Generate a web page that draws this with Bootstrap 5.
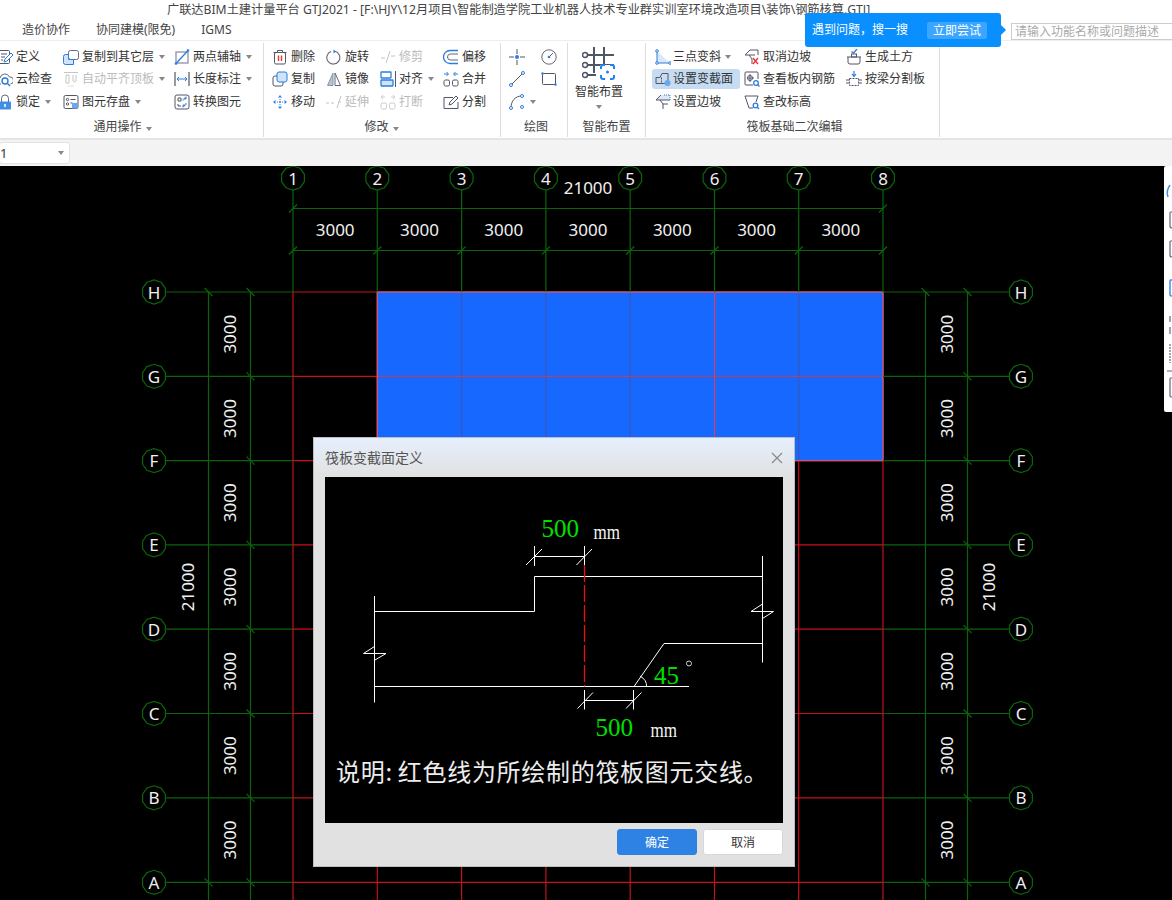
<!DOCTYPE html>
<html lang="zh-CN">
<head>
    <meta charset="UTF-8">
    <meta name="viewport" content="width=device-width, initial-scale=1.0">
    <title>筏板变截面定义</title>
    <link rel="stylesheet" href="https://cdn.jsdelivr.net/npm/bootstrap@5.3.0/dist/css/bootstrap.min.css">
    <style>
        html, body { margin: 0; background: #000; overflow: hidden; }
        body { font-family: "Noto Sans", "Noto Sans CJK SC", sans-serif; font-size: 12px; color: #333; }
        .app-shell { width: 1172px; height: 900px; overflow: hidden; position: relative; }
        .title-row { height: 20px; line-height: 20px; padding-left: 167px; background: #fff; white-space: nowrap; overflow: hidden; font-size: 12.2px; color: #444; }
        .tab-row { height: 21px; background: #fff; border-bottom: 1px solid #eee; padding-left: 22px; gap: 26px; line-height: 20px; color: #444; }
        .search-box { margin-left: auto; width: 170px; flex: none; height: 17px; margin-top: 3px; margin-right: -9px; border: 1px solid #ccc; border-radius: 0; padding: 0 3px; font-size: 12px; line-height: 15px; color: #aaa; background: #fff; }
        .ribbon { height: 99px; background: #fff; border-bottom: 2px solid #e4e4e4; }
        .rib-group { height: 94px; border-right: 1px solid #ddd; margin-top: 2px; flex: none; }
        .rib-cols { height: 74px; padding-top: 2.5px; }
        .rib-label { height: 20px; line-height: 20px; text-align: center; color: #444; }
        .g-main { width: 264px; }
        .g-main .rib-label { padding-right: 18px; }
        .g-edit { width: 237px; }
        .g-edit .rib-label { padding-right: 1px; }
        .g-draw { width: 67px; }
        .g-draw .rib-label { padding-left: 4px; }
        .g-smart { width: 78px; }
        .g-raft { width: 294px; }
        .g-raft .rib-label { padding-left: 4px; }
        .c-a { width: 66px; margin-left: -3px; }
        .c-b { width: 111px; }
        .c-c { width: 89px; }
        .c-d { width: 54px; margin-left: 8px; }
        .c-e { width: 54px; }
        .c-f { width: 63px; }
        .c-g { width: 56px; }
        .c-h { width: 32px; margin-left: 8px; }
        .c-i { width: 89px; margin-left: 9px; }
        .c-i .tool { gap: 2px; }
        .c-j { width: 102px; }
        .c-k { width: 80px; }
        .tool { height: 22.5px; gap: 3px; white-space: nowrap; color: #333; }
        .tool svg { flex: none; width: 16px; height: 16px; }
        .tool-off { color: #bbb; }
        .tool-on { background: #c5dcf3; border-radius: 3px; margin-left: -3px; padding-left: 3px; width: 88px; height: 20px; margin-top: 1px; margin-bottom: 1.5px; }
        .tool-caret { display: inline-block; width: 0; height: 0; border: 3px solid transparent; border-top: 4px solid #888; border-bottom: 0; margin-left: 4px; }
        .tool .tool-caret { margin-left: 2px; }
        .big-tool { width: 48px; height: 70px; margin-left: 7px; }
        .big-tool svg { width: 34px; height: 36px; }
        .big-tool .tool-caret { margin-left: 0; margin-top: 4px; }
        .big-name { margin-top: 1px; line-height: 18px; }
        .prop-bar { height: 26px; background: #f3f3f3; padding-top: 2px; }
        .floor-pick { width: 71px; height: 22px; margin-left: -1px; background: #fff; border: 1px solid #e2e2e2; border-radius: 3px; line-height: 20px; padding-right: 5px; font-size: 13px; color: #333; }
        .cad-view { display: block; width: 1172px; height: 734px; background: #000; }
        .cad-txt { font-family: "Noto Sans", sans-serif; font-size: 17px; fill: #f0f0f0; text-anchor: middle; dominant-baseline: central; }
        .hint-pop { position: absolute; left: 805px; top: 13px; width: 196px; height: 34px; background: #0a8fff; border-radius: 3px; color: #fff; padding-left: 7px; font-size: 12px; }
        .hint-pop::after { content: ""; position: absolute; left: 196px; top: 12px; border: 5px solid transparent; border-left-color: #0a8fff; border-right: 0; }
        .hint-btn { margin-left: 19px; width: 60px; height: 17px; line-height: 17px; text-align: center; background: #3ba5ff; border-radius: 2px; }
        .side-strip { position: absolute; left: 1164px; top: 166px; width: 8px; height: 246px; background: #fff; border-radius: 2px 0 0 2px; }
        .side-strip svg { display: block; }
        .raft-dlg { position: absolute; left: 313px; top: 437px; width: 482px; height: 430px; background: #e1e1e1; border: 1px solid #bdbdbd; }
        .dlg-head { height: 39px; padding: 0 11px; background: linear-gradient(#e6effd, #e1e1e1); color: #555; font-size: 14px; }
        .dlg-shot { display: block; width: 458px; height: 346px; margin-left: 11px; background: #000; }
        .dlg-foot { padding: 6px 11px 0 0; gap: 6px; }
        .dlg-btn { width: 80px; height: 26px; padding: 2px 0 0; font-size: 12px; line-height: 22px; border-radius: 3px; }
        .dlg-ok { background: #2e82e3; border: 1px solid #2e82e3; color: #fff; }
        .dlg-no { background: #fff; border: 1px solid #d8d8d8; color: #333; }
        .shot-serif { font-family: "Liberation Serif", serif; }
        .shot-note { font-family: "Noto Sans CJK SC", sans-serif; font-size: 24px; fill: #ececec; letter-spacing: .7px; }
    </style>
</head>
<body>
<svg width="0" height="0" class="position-absolute">
    <defs>
        <symbol id="i-def" viewBox="0 0 16 16"><rect x="1.500" y="1.500" width="11" height="13" rx="1" fill="none" stroke="#556"/><path d="M4 5h6M4 8h4M4 11h2" stroke="#556"/><path d="M7 13l1-3 6-6 2 2-6 6z" fill="#fff" stroke="#2b7de0"/></symbol>
        <symbol id="i-cloud" viewBox="0 0 16 16"><path d="M4 13H3a3 3 0 0 1 0-6 5 5 0 0 1 9.500-1 3.500 3.500 0 0 1 1 7" fill="none" stroke="#667"/><circle cx="8" cy="10" r="3" fill="#fff" stroke="#2b7de0" stroke-width="1.400"/><path d="M10 12l3 3" stroke="#2b7de0" stroke-width="1.400"/></symbol>
        <symbol id="i-lock" viewBox="0 0 16 16"><path d="M4.500 8V4.500a3.500 3.500 0 0 1 7 0V8" fill="none" stroke="#667"/><rect x="2" y="7.500" width="12" height="8" rx="1" fill="#3f8fe8"/><rect x="7.200" y="10" width="1.600" height="3" fill="#fff"/></symbol>
        <symbol id="i-layer" viewBox="0 0 16 16"><rect x="5.500" y="1.500" width="10" height="9" rx="2" fill="#fff" stroke="#667"/><path d="M.5 7.500a2 2 0 0 1 2-2h3v5h5v5h-8a2 2 0 0 1-2-2z" fill="#cfe3fa" stroke="#2b7de0"/></symbol>
        <symbol id="i-auto" viewBox="0 0 16 16"><path d="M1 1.500h14M3 4h3v8H3zM10 4v6a2 2 0 0 0 3 0V4" fill="none" stroke="#c4c4c4"/><path d="M5 15h6" stroke="#ddd"/></symbol>
        <symbol id="i-save" viewBox="0 0 16 16"><rect x="1" y="1.500" width="14" height="13" rx="1.500" fill="none" stroke="#556"/><circle cx="4.500" cy="5.500" r="1.200" fill="none" stroke="#556"/><circle cx="4.500" cy="10" r="1.200" fill="none" stroke="#556"/><path d="M7.500 5.500h5M7.500 9h2" stroke="#556"/><rect x="9" y="9" width="6" height="5.500" fill="#6aa8ec"/></symbol>
        <symbol id="i-axis" viewBox="0 0 16 16"><rect x="2" y="3" width="12" height="11" fill="none" stroke="#99a" stroke-width="1.400"/><path d="M1.500 15L14.500 1" stroke="#2b7de0" stroke-width="1.300"/><circle cx="2" cy="14.500" r="1.300" fill="#2b7de0"/><circle cx="14" cy="1.500" r="1.300" fill="#2b7de0"/></symbol>
        <symbol id="i-len" viewBox="0 0 16 16"><path d="M1 1v14M15 1v14" stroke="#556" stroke-width="1.200"/><path d="M3 8h10M5 6L3 8l2 2M11 6l2 2-2 2" fill="none" stroke="#2b7de0"/></symbol>
        <symbol id="i-swap" viewBox="0 0 16 16"><rect x="1" y="1" width="14" height="14" rx="2" fill="none" stroke="#556"/><path d="M4 4h3v3H4zM4 10v2h3" fill="none" stroke="#556"/><path d="M9 6.500a2.500 2.500 0 0 1 3-2.500M12 2.500V5H10M12 9a2.500 2.500 0 0 1-3 3M9 13.500V11h2" fill="none" stroke="#2b7de0"/></symbol>
        <symbol id="i-del" viewBox="0 0 16 16"><path d="M1.500 3.500h13M5.500 3.500V1.500h5v2" fill="none" stroke="#556"/><rect x="2.500" y="3.500" width="11" height="11.500" rx="1.500" fill="none" stroke="#556"/><path d="M6.500 6.500v5.500M9.500 6.500v5.500" stroke="#e33" stroke-width="1.400"/></symbol>
        <symbol id="i-rot" viewBox="0 0 16 16"><path d="M9 2.300A6.500 6.500 0 1 1 5 2.500" fill="none" stroke="#667" stroke-width="1.100"/><path d="M7.500.5L10 2.500 7.500 4.500z" fill="#2b7de0"/></symbol>
        <symbol id="i-trim" viewBox="0 0 16 16"><path d="M1 9h4M11 7h4M6 14L10 2" fill="none" stroke="#c4c4c4"/></symbol>
        <symbol id="i-copy" viewBox="0 0 16 16"><rect x="1" y="5" width="10" height="10" rx="2" fill="#fff" stroke="#556"/><rect x="5" y="1" width="10" height="10" rx="2" fill="#cfe3fa" stroke="#2b7de0"/></symbol>
        <symbol id="i-mirror" viewBox="0 0 16 16"><path d="M7 2L1.500 14.500H7z" fill="#b6c6da" stroke="#8a96a8"/><path d="M9 2l5.500 12.500H9z" fill="#fff" stroke="#667"/></symbol>
        <symbol id="i-align" viewBox="0 0 16 16"><rect x="1" y="1" width="10" height="6" rx=".5" fill="#fff" stroke="#2b7de0" stroke-width="1.300"/><rect x="1" y="9" width="12" height="6" rx=".5" fill="#cfe3fa" stroke="#2b7de0" stroke-width="1.300"/><path d="M15.500 0v16" stroke="#556"/></symbol>
        <symbol id="i-merge" viewBox="0 0 16 16"><rect x="1" y="9" width="5.500" height="6" rx="1.500" fill="none" stroke="#556"/><rect x="9.500" y="9" width="5.500" height="6" rx="1.500" fill="none" stroke="#556"/><path d="M1 3h4M3.500 1L5.500 3 3.500 5M15 3h-4M12.500 1l-2 2 2 2" fill="none" stroke="#2b7de0"/></symbol>
        <symbol id="i-move" viewBox="0 0 16 16"><path d="M8 1L6 3.500h4zM8 15l-2-2.500h4zM1 8l2.500-2v4zM15 8l-2.500-2v4z" fill="#2b7de0"/><path d="M8 5v1M8 10v1M5 8h1M10 8h1" stroke="#2b7de0"/><circle cx="8" cy="8" r="1" fill="#2b7de0"/></symbol>
        <symbol id="i-ext" viewBox="0 0 16 16"><path d="M0 9h3M5 9h3M11 14l4-12M12 8h3" fill="none" stroke="#c4c4c4"/></symbol>
        <symbol id="i-break" viewBox="0 0 16 16"><rect x="1" y="9" width="5.500" height="6" rx="1.500" fill="none" stroke="#ccc"/><rect x="9.500" y="9" width="5.500" height="6" rx="1.500" fill="none" stroke="#ccc"/><path d="M1 3h4M3 1L1 3l2 2M15 3h-4M13 1l2 2-2 2" fill="none" stroke="#ccc"/></symbol>
        <symbol id="i-offset" viewBox="0 0 16 16"><path d="M15 1.500H7a6.500 6.500 0 0 0 0 13h8" fill="none" stroke="#2b7de0" stroke-width="1.300"/><path d="M15 5H7.500a3 3 0 0 0 0 6H15" fill="none" stroke="#667"/></symbol>
        <symbol id="i-split" viewBox="0 0 16 16"><path d="M15 8v6.500H1v-11h9" fill="none" stroke="#556"/><path d="M6 11l1-3 6-6 2 2-6 6z" fill="#fff" stroke="#556"/></symbol>
        <symbol id="i-pt" viewBox="0 0 16 16"><path d="M0 8h5M11 8h5M8 0v5M8 11v5" stroke="#556"/><circle cx="8" cy="8" r="2" fill="#2b7de0"/></symbol>
        <symbol id="i-circ" viewBox="0 0 16 16"><circle cx="8" cy="8" r="7.200" fill="none" stroke="#667"/><path d="M8 8l4-4" stroke="#667"/><circle cx="8" cy="8" r="1.300" fill="#2b7de0"/></symbol>
        <symbol id="i-line" viewBox="0 0 16 16"><path d="M2 14L14 2" stroke="#556"/><circle cx="2" cy="14" r="1.500" fill="#fff" stroke="#2b7de0"/><circle cx="14" cy="2" r="1.500" fill="#fff" stroke="#2b7de0"/></symbol>
        <symbol id="i-rect" viewBox="0 0 16 16"><rect x="1.500" y="2.500" width="13" height="11" rx="1" fill="none" stroke="#556"/><circle cx="1.500" cy="2.500" r="1.200" fill="#2b7de0"/><circle cx="14.500" cy="13.500" r="1.200" fill="#2b7de0"/></symbol>
        <symbol id="i-arc" viewBox="0 0 16 16"><path d="M2 14C2 7 6 2 13 2" fill="none" stroke="#556"/><circle cx="2" cy="14" r="1.500" fill="#fff" stroke="#2b7de0"/><circle cx="13" cy="2" r="1.500" fill="#fff" stroke="#2b7de0"/><circle cx="13" cy="13" r="1.500" fill="#fff" stroke="#2b7de0"/></symbol>
        <symbol id="i-grid" viewBox="0 0 34 36"><path d="M12 1v26M22 1v20M0 9h32M0 19h32M0 29h14" stroke="#4d5665" stroke-width="2"/><circle cx="3" cy="9" r="2.500" fill="#fff" stroke="#4d5665" stroke-width="1.500"/><circle cx="3" cy="19" r="2.500" fill="#fff" stroke="#4d5665" stroke-width="1.500"/><circle cx="3" cy="29" r="2.500" fill="#fff" stroke="#4d5665" stroke-width="1.500"/><rect x="18" y="19" width="15" height="15" fill="#fff"/><path d="M19 23v-2a2 2 0 0 1 2-2h2M28 19h2a2 2 0 0 1 2 2v2M32 29v2a2 2 0 0 1-2 2h-2M23 33h-2a2 2 0 0 1-2-2v-2" fill="none" stroke="#1f82ee" stroke-width="2"/><circle cx="25.500" cy="26" r="1.500" fill="#1f82ee"/></symbol>
        <symbol id="i-tri" viewBox="0 0 16 16"><path d="M2 2v12h13z" fill="#dbe8f8"/><path d="M2 2v12h13" fill="none" stroke="#2b7de0"/><circle cx="2" cy="2" r="1.300" fill="#fff" stroke="#2b7de0"/><circle cx="2" cy="14" r="1.300" fill="#fff" stroke="#2b7de0"/><circle cx="15" cy="14" r="1.300" fill="#fff" stroke="#2b7de0"/></symbol>
        <symbol id="i-var" viewBox="0 0 16 16"><path d="M1 6.500h4l2-4h6v10H1z" fill="none" stroke="#556"/><path d="M6.500 6.500v6" stroke="#556" stroke-dasharray="2 1"/><circle cx="12.500" cy="12" r="3" fill="#6aa8ec"/></symbol>
        <symbol id="i-slope" viewBox="0 0 16 16"><path d="M1 6L7 1h8v5z" fill="#dbe8f8"/><path d="M1 6L6 1" stroke="#556"/><path d="M1 6h14M5 6l3 4h5" fill="none" stroke="#556"/><path d="M8 10v5" stroke="#556"/><path d="M9 1h6v5" fill="none" stroke="#2b7de0" stroke-dasharray="1 1"/></symbol>
        <symbol id="i-unslope" viewBox="0 0 16 16"><path d="M1 6L6 1h8v5" fill="none" stroke="#556"/><path d="M1 6h10M5 6l3 4M8 10v5" fill="none" stroke="#556"/><path d="M9 9l5 6M14 9l-5 6" stroke="#e33" stroke-width="1.400"/></symbol>
        <symbol id="i-rebar" viewBox="0 0 16 16"><path d="M9 14H2a1 1 0 0 1-1-1V2a1 1 0 0 1 1-1h11a1 1 0 0 1 1 1v6" fill="none" stroke="#556"/><circle cx="6" cy="7" r="2.500" fill="none" stroke="#556"/><path d="M6 3v8M3 7h7" stroke="#556"/><circle cx="12" cy="12" r="2.300" fill="#fff" stroke="#2b7de0" stroke-width="1.300"/><path d="M13.500 13.500L15.500 15.500" stroke="#2b7de0" stroke-width="1.300"/></symbol>
        <symbol id="i-elev" viewBox="0 0 16 16"><path d="M9 14H5L1 2h13l-2 6" fill="none" stroke="#556"/><circle cx="11.500" cy="11.500" r="2.300" fill="#fff" stroke="#2b7de0" stroke-width="1.300"/><path d="M13 13l2 2" stroke="#2b7de0" stroke-width="1.300"/></symbol>
        <symbol id="i-earth" viewBox="0 0 16 16"><path d="M1 8h14M2 8v5a2 2 0 0 0 2 2h8a2 2 0 0 0 2-2V8" fill="none" stroke="#556"/><rect x="5.500" y="5" width="5" height="3" fill="none" stroke="#556"/><path d="M5.500 2.500L7.500 4 11 0" fill="none" stroke="#2b7de0" stroke-width="1.300"/></symbol>
        <symbol id="i-beam" viewBox="0 0 16 16"><path d="M0 9h3M0 12h3M13 9h3M13 12h3" stroke="#556"/><rect x="3.500" y="7.500" width="9" height="7" fill="none" stroke="#556" stroke-dasharray="2 1"/><path d="M8 0v5M6 3l2 2.500L10 3" fill="none" stroke="#2b7de0" stroke-width="1.200"/></symbol>
    </defs>
</svg>

<div class="app-shell">
    <div class="title-row">广联达BIM土建计量平台 GTJ2021 - [F:\HJY\12月项目\智能制造学院工业机器人技术专业群实训室环境改造项目\装饰\钢筋核算.GTJ]</div>
    <div class="tab-row d-flex">
        <span>造价协作</span>
        <span>协同建模(限免)</span>
        <span>IGMS</span>
        <div class="search-box">请输入功能名称或问题描述</div>
    </div>

    <div class="ribbon d-flex">
        <div class="rib-group g-main">
            <div class="rib-cols d-flex">
                <div class="c-a">
                    <div class="tool d-flex align-items-center"><svg><use href="#i-def"/></svg>定义</div>
                    <div class="tool d-flex align-items-center"><svg><use href="#i-cloud"/></svg>云检查</div>
                    <div class="tool d-flex align-items-center"><svg><use href="#i-lock"/></svg>锁定<i class="tool-caret"></i></div>
                </div>
                <div class="c-b">
                    <div class="tool d-flex align-items-center"><svg><use href="#i-layer"/></svg>复制到其它层<i class="tool-caret"></i></div>
                    <div class="tool tool-off d-flex align-items-center"><svg><use href="#i-auto"/></svg>自动平齐顶板<i class="tool-caret"></i></div>
                    <div class="tool d-flex align-items-center"><svg><use href="#i-save"/></svg>图元存盘<i class="tool-caret"></i></div>
                </div>
                <div class="c-c">
                    <div class="tool d-flex align-items-center"><svg><use href="#i-axis"/></svg>两点辅轴<i class="tool-caret"></i></div>
                    <div class="tool d-flex align-items-center"><svg><use href="#i-len"/></svg>长度标注<i class="tool-caret"></i></div>
                    <div class="tool d-flex align-items-center"><svg><use href="#i-swap"/></svg>转换图元</div>
                </div>
            </div>
            <div class="rib-label">通用操作<i class="tool-caret"></i></div>
        </div>

        <div class="rib-group g-edit">
            <div class="rib-cols d-flex">
                <div class="c-d">
                    <div class="tool d-flex align-items-center"><svg><use href="#i-del"/></svg>删除</div>
                    <div class="tool d-flex align-items-center"><svg><use href="#i-copy"/></svg>复制</div>
                    <div class="tool d-flex align-items-center"><svg><use href="#i-move"/></svg>移动</div>
                </div>
                <div class="c-e">
                    <div class="tool d-flex align-items-center"><svg><use href="#i-rot"/></svg>旋转</div>
                    <div class="tool d-flex align-items-center"><svg><use href="#i-mirror"/></svg>镜像</div>
                    <div class="tool tool-off d-flex align-items-center"><svg><use href="#i-ext"/></svg>延伸</div>
                </div>
                <div class="c-f">
                    <div class="tool tool-off d-flex align-items-center"><svg><use href="#i-trim"/></svg>修剪</div>
                    <div class="tool d-flex align-items-center"><svg><use href="#i-align"/></svg>对齐<i class="tool-caret"></i></div>
                    <div class="tool tool-off d-flex align-items-center"><svg><use href="#i-break"/></svg>打断</div>
                </div>
                <div class="c-g">
                    <div class="tool d-flex align-items-center"><svg><use href="#i-offset"/></svg>偏移</div>
                    <div class="tool d-flex align-items-center"><svg><use href="#i-merge"/></svg>合并</div>
                    <div class="tool d-flex align-items-center"><svg><use href="#i-split"/></svg>分割</div>
                </div>
            </div>
            <div class="rib-label">修改<i class="tool-caret"></i></div>
        </div>

        <div class="rib-group g-draw">
            <div class="rib-cols d-flex">
                <div class="c-h">
                    <div class="tool d-flex align-items-center"><svg><use href="#i-pt"/></svg></div>
                    <div class="tool d-flex align-items-center"><svg><use href="#i-line"/></svg></div>
                    <div class="tool d-flex align-items-center"><svg><use href="#i-arc"/></svg><i class="tool-caret"></i></div>
                </div>
                <div>
                    <div class="tool d-flex align-items-center"><svg><use href="#i-circ"/></svg></div>
                    <div class="tool d-flex align-items-center"><svg><use href="#i-rect"/></svg></div>
                </div>
            </div>
            <div class="rib-label">绘图</div>
        </div>

        <div class="rib-group g-smart">
            <div class="rib-cols">
                <div class="big-tool d-flex flex-column align-items-center">
                    <svg><use href="#i-grid"/></svg>
                    <div class="big-name">智能布置</div>
                    <i class="tool-caret"></i>
                </div>
            </div>
            <div class="rib-label">智能布置</div>
        </div>

        <div class="rib-group g-raft">
            <div class="rib-cols d-flex">
                <div class="c-i">
                    <div class="tool d-flex align-items-center"><svg><use href="#i-tri"/></svg>三点变斜<i class="tool-caret"></i></div>
                    <div class="tool tool-on d-flex align-items-center"><svg><use href="#i-var"/></svg>设置变截面</div>
                    <div class="tool d-flex align-items-center"><svg><use href="#i-slope"/></svg>设置边坡</div>
                </div>
                <div class="c-j">
                    <div class="tool d-flex align-items-center"><svg><use href="#i-unslope"/></svg>取消边坡</div>
                    <div class="tool d-flex align-items-center"><svg><use href="#i-rebar"/></svg>查看板内钢筋</div>
                    <div class="tool d-flex align-items-center"><svg><use href="#i-elev"/></svg>查改标高</div>
                </div>
                <div class="c-k">
                    <div class="tool d-flex align-items-center"><svg><use href="#i-earth"/></svg>生成土方</div>
                    <div class="tool d-flex align-items-center"><svg><use href="#i-beam"/></svg>按梁分割板</div>
                </div>
            </div>
            <div class="rib-label">筏板基础二次编辑</div>
        </div>
    </div>

    <div class="prop-bar">
        <div class="floor-pick d-flex align-items-center justify-content-between"><span>1</span><i class="tool-caret"></i></div>
    </div>

    <svg id="cad" class="cad-view" viewBox="0 166 1172 734"></svg>

    <div class="hint-pop d-flex align-items-center">
        <span>遇到问题，搜一搜</span>
        <span class="hint-btn">立即尝试</span>
    </div>

    <div class="side-strip">
        <svg width="8" height="246" viewBox="0 0 8 246">
            <path d="M6 19C3 23 3 28 4 31" fill="none" stroke="#3f8fe8" stroke-width="1.500"/>
            <path d="M8 46H6.500Q6 46 6 47V60Q6 62 8 62" fill="none" stroke="#667" stroke-width="1.200"/>
            <path d="M8 75H6.500Q6 75 6 76V89Q6 91 8 91" fill="none" stroke="#667" stroke-width="1.200"/>
            <path d="M8 114H6.500Q6 114 6 115V129Q6 130 8 130" fill="none" stroke="#3f8fe8" stroke-width="1.500"/>
            <path d="M6 150v6M6 161v7" stroke="#667" stroke-width="1.200"/>
            <path d="M6 178v19" stroke="#667" stroke-width="1.200" stroke-dasharray="2 1"/>
            <path d="M3 205h5" stroke="#667"/>
            <path d="M8 212H6.500Q6 212 6 213V230Q6 231 8 231" fill="none" stroke="#667" stroke-width="1.200"/>
        </svg>
    </div>

    <div class="raft-dlg">
        <div class="dlg-head d-flex align-items-center justify-content-between">
            <span>筏板变截面定义</span>
            <svg width="12" height="12" viewBox="0 0 12 12"><path d="M1 1l10 10M11 1L1 11" stroke="#888" stroke-width="1.200"/></svg>
        </div>
        <svg class="dlg-shot" viewBox="325 477 458 346">
            <g fill="none" stroke="#fff" stroke-width="1">
                <path d="M374.500 596V702.500M374.500 611.500H534.500V576.500H762.500M762.500 556V662.500M664 643.500H762.500M664 643.500L634 686.500M374.500 686.500H689"/>
                <path d="M534.500 546V566M584.500 546V566M534.500 556.500H584.500M526 565L542 549M576.500 565L592 549"/>
                <path d="M584.500 690V709.500M633.500 690V709.500M584.500 700.500H633.500M577.500 708.500L593 692.500M626 708.500L641.500 692.500"/>
                <path d="M363.500 653.500H386M363.500 653.500L374.500 646.500M386 653.500L375 660M751 611.500H773.500M751 611.500L762.500 604M773.500 611.500L762.500 618.500"/>
                <path d="M640 676Q647 680 646.500 686.500"/>
            </g>
            <path d="M584.500 565V686.500" stroke="#f01010" stroke-width="1.300" stroke-dasharray="17 3"/>
            <circle cx="689" cy="663.500" r="2.500" fill="none" stroke="#c8d4e6"/>
            <g class="shot-serif" fill="#00e000" font-size="25">
                <text x="541.500" y="536.500">500</text>
                <text x="654" y="684">45</text>
                <text x="595.500" y="735.500">500</text>
            </g>
            <g class="shot-serif" fill="#f4f4f4" font-size="21">
                <text x="593.500" y="539" textLength="26.500" lengthAdjust="spacingAndGlyphs">mm</text>
                <text x="650.500" y="737" textLength="26.500" lengthAdjust="spacingAndGlyphs">mm</text>
            </g>
            <text class="shot-note" x="336" y="780.500">说明:<tspan dx="5">红色线为所绘制的筏板图元交线。</tspan></text>
        </svg>
        <div class="dlg-foot d-flex justify-content-end">
            <button type="button" class="btn dlg-btn dlg-ok">确定</button>
            <button type="button" class="btn dlg-btn dlg-no">取消</button>
        </div>
    </div>
</div>

<script src="https://cdn.jsdelivr.net/npm/bootstrap@5.3.0/dist/js/bootstrap.bundle.min.js"></script>
<script>
    const xs = [293, 377.3, 461.6, 545.9, 630.2, 714.5, 798.7, 883];
    const ys = [292, 376.3, 460.6, 544.9, 629.2, 713.5, 797.8, 882.3];
    const rowNames = ['H', 'G', 'F', 'E', 'D', 'C', 'B', 'A'];
    const GREEN = '#0b640b', RED = '#c4121a';
    let out = '';

    function line(x1, y1, x2, y2, color, w) {
        out += `<line x1="${x1}" y1="${y1}" x2="${x2}" y2="${y2}" stroke="${color}" stroke-width="${w || 1.2}"/>`;
    }
    function label(x, y, text, rot) {
        const t = rot ? ` transform="rotate(-90 ${x} ${y})"` : '';
        out += `<text class="cad-txt" x="${x}" y="${y}"${t}>${text}</text>`;
    }
    function bubble(x, y, text) {
        let pts = [];
        for (let i = 0; i < 10; i++) {
            const a = Math.PI * 2 * i / 10 + Math.PI / 10;
            pts.push((x + 12 * Math.cos(a)).toFixed(1) + ',' + (y + 12 * Math.sin(a)).toFixed(1));
        }
        out += `<polygon points="${pts.join(' ')}" fill="#000" stroke="${GREEN}" stroke-width="1.2"/>`;
        label(x, y, text);
    }

    // red grid below the slab
    xs.forEach(x => line(x, 292, x, 900, RED));
    ys.forEach(y => line(293, y, 883, y, RED));

    // slab fill and its inner lines
    out += `<rect x="377.300" y="292" width="505.700" height="168.600" fill="#1668ff" stroke="#c8587a" stroke-width="1.400"/>`;
    [461.6, 545.9, 630.2, 798.7].forEach(x => line(x, 293, x, 460, '#3d55b8'));
    line(714.5, 293, 714.5, 460, '#d8405f');
    line(378, 376.3, 882, 376.3, '#b8405f');

    // axis lines up to the bubbles
    xs.forEach((x, i) => {
        line(x, 190, x, 292, GREEN);
        bubble(x, 178, i + 1);
    });
    ys.forEach((y, i) => {
        line(166, y, 293, y, GREEN);
        line(883, y, 1009, y, GREEN);
        bubble(154, y, rowNames[i]);
        bubble(1021, y, rowNames[i]);
    });

    // top dimensions
    line(293, 208.5, 883, 208.5, GREEN);
    line(293, 250.5, 883, 250.5, GREEN);
    [293, 883].forEach(x => line(x - 4, 212.5, x + 4, 204.5, GREEN));
    xs.forEach(x => line(x - 4, 254.5, x + 4, 246.5, GREEN));
    label(588, 187, '21000');
    for (let i = 0; i < 7; i++) label((xs[i] + xs[i + 1]) / 2, 229, '3000');

    // left and right dimensions
    [[208.5, 250.5, 229.5, 187.5], [925.5, 967.5, 946.5, 988.5]].forEach(d => {
        line(d[0], 292, d[0], 900, GREEN);
        line(d[1], 292, d[1], 900, GREEN);
        [292, 882.3].forEach(y => line(d[0] - 4, y - 4, d[0] + 4, y + 4, GREEN));
        ys.forEach(y => line(d[1] - 4, y - 4, d[1] + 4, y + 4, GREEN));
        for (let i = 0; i < 7; i++) label(d[2], (ys[i] + ys[i + 1]) / 2, '3000', true);
        label(d[3], 587, '21000', true);
    });

    document.getElementById('cad').innerHTML = out;
</script>
</body>
</html>
